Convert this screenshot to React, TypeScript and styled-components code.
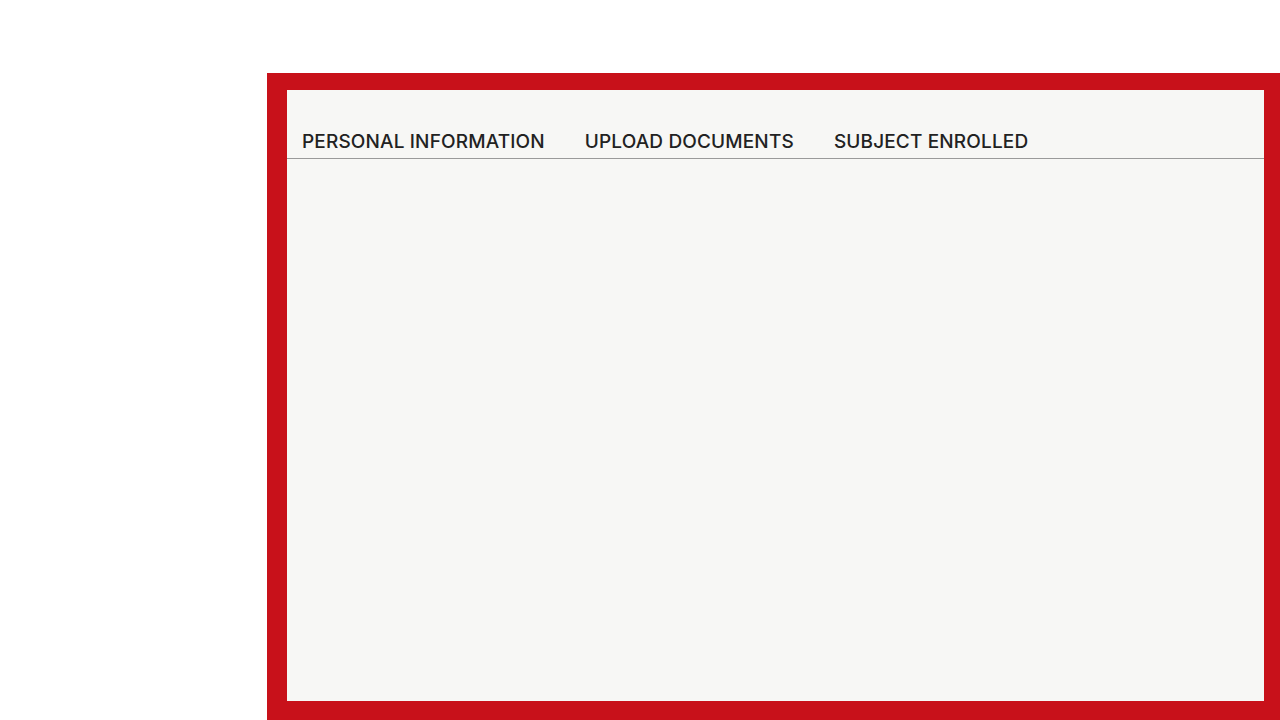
import React from "react";
import styled, { createGlobalStyle } from "styled-components";

const GlobalStyle = createGlobalStyle`
  html, body {
    margin: 0;
    padding: 0;
    background: #ffffff;
    overflow: hidden;
  }
`;

const tabs = ["PERSONAL INFORMATION", "UPLOAD DOCUMENTS", "SUBJECT ENROLLED"];

export default function App() {
  return (
    <>
      <GlobalStyle />
      <SPage>
        <SFrame>
          <SPanel>
            <STabBar>
              {tabs.map((t) => (
                <STab key={t}>{t}</STab>
              ))}
            </STabBar>
          </SPanel>
        </SFrame>
      </SPage>
    </>
  );
}

const SPage = styled.main`
  width: 1280px;
  height: 720px;
  padding: 73px 0 0 267px;
  box-sizing: border-box;
  display: flex;
`;

const SFrame = styled.section`
  flex: 1;
  background: #c8111a;
  padding: 17px 16px 19px 20px;
  display: flex;
`;

const SPanel = styled.div`
  flex: 1;
  background: #f7f7f5;
  display: flex;
  flex-direction: column;
`;

const STabBar = styled.nav`
  display: flex;
  gap: 40px;
  padding: 40px 15px 5px;
  border-bottom: 1px solid #9a9a9a;
`;

const STab = styled.span`
  font-family: Inter, "Liberation Sans", sans-serif;
  font-size: 19px;
  line-height: 23px;
  font-weight: 500;
  letter-spacing: 0.15px;
  color: #222222;
`;
